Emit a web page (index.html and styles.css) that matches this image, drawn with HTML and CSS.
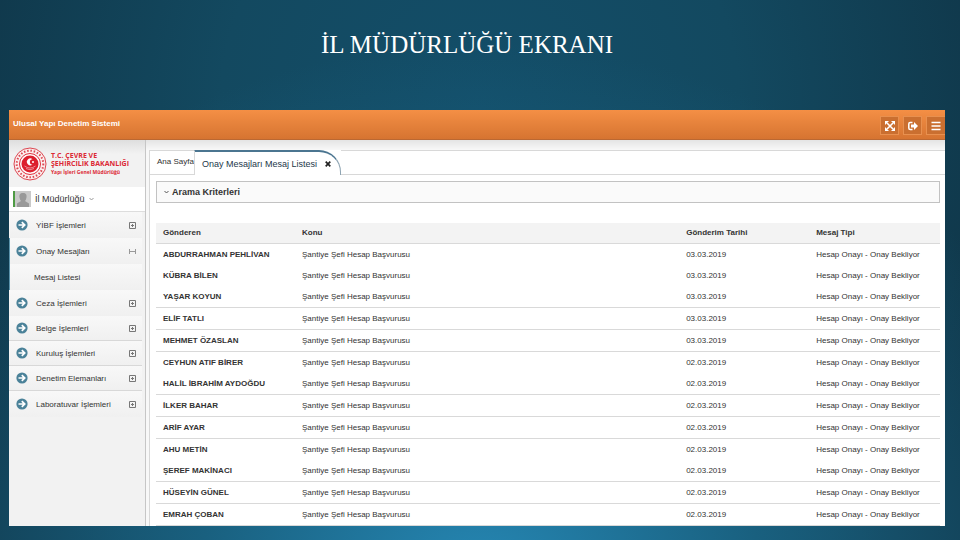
FILE: index.html
```html
<!DOCTYPE html>
<html lang="tr">
<head>
<meta charset="utf-8">
<title>Ulusal Yapı Denetim Sistemi</title>
<link rel="stylesheet" href="styles.css">
</head>
<body>
<svg class="defs" aria-hidden="true">
  <symbol id="arrow" viewBox="0 0 12 12"><circle cx="6" cy="6" r="5.6" fill="#4b8299"/><path d="M2.5 6H8M5.8 3.2L8.7 6 5.8 8.8" fill="none" stroke="#fff" stroke-width="1.7"/></symbol>
  <symbol id="plus" viewBox="0 0 7 7"><path d="M.5 .5H6.500V6.500H.5ZM2 3.500H5M3.500 2V5" fill="none" stroke="#777" stroke-width="1"/></symbol>
  <symbol id="minus" viewBox="0 0 7 7"><path d="M.5 1V6M6.500 1V6M1 3.500H6" fill="none" stroke="#999" stroke-width="1"/></symbol>
</svg>
<h1 class="title">İL MÜDÜRLÜĞÜ EKRANI</h1>
<div class="app">
  <header class="topbar">
    <strong class="brand">Ulusal Yapı Denetim Sistemi</strong>
    <div class="actions">
      <button class="action" aria-label="Tam ekran"><svg viewBox="0 0 10 10"><path d="M2 2L8 8M8 2L2 8" stroke="#fff" stroke-width="1.6"/><path d="M0 0H4L0 4ZM10 0V4L6 0ZM0 10V6L4 10ZM10 10H6L10 6Z" fill="#fff"/></svg></button>
      <button class="action" aria-label="Çıkış"><svg viewBox="0 0 10 10"><path d="M4.500 1.500H2.200Q.8 1.500 .8 3V7Q.8 8.500 2.200 8.500H4.500" fill="none" stroke="#fff" stroke-width="1.500"/><path d="M3 3.500H6V1L10 5 6 9V6.500H3Z" fill="#fff"/></svg></button>
      <button class="action" aria-label="Menü"><svg viewBox="0 0 10 10"><path d="M.5 1.500H9.500M.5 5H9.500M.5 8.500H9.500" stroke="#fff" stroke-width="1.500"/></svg></button>
    </div>
  </header>
  <div class="body">
    <aside class="sidebar">
      <div class="logo">
        <svg class="seal" viewBox="0 0 34 34">
          <circle cx="17" cy="17" r="16" fill="#fbeeee" stroke="#dc4650" stroke-width="1"/>
          <circle cx="17" cy="17" r="13.300" fill="none" stroke="#dc4650" stroke-width="2" stroke-dasharray="1.500 1.800"/>
          <circle cx="17" cy="17" r="10.500" fill="#fff" stroke="#e0303c" stroke-width="1"/>
          <circle cx="17" cy="17" r="8.500" fill="#dc1f2d"/>
          <path d="M11.500 19Q17 23 22.500 19M13 21.500Q17 24 21 21.500" fill="none" stroke="#f3a8ad" stroke-width=".8"/>
          <path d="M19.500 12.300A3.400 3.400 0 1 0 19.500 17.500A2.600 2.600 0 1 1 19.500 12.300Z" fill="#fff"/>
          <circle cx="20" cy="15" r="1" fill="#fff"/>
        </svg>
        <div class="ministry"><b>T.C. ÇEVRE VE</b><b>ŞEHİRCİLİK BAKANLIĞI</b><small>Yapı İşleri Genel Müdürlüğü</small></div>
      </div>
      <button class="user">
        <svg class="avatar" viewBox="0 0 18 16"><path d="M0 0H18V16H0Z" fill="#c9c9c9"/><path d="M0 0H2V16H0Z" fill="#4f9b45"/><path d="M10 2C13 2 14 4 13.500 6.500Q13 9 12 10L16 12.500V16H4V12.500L8 10Q7 9 6.500 6.500C6 4 7 2 10 2Z" fill="#999"/></svg>
        <span>İl Müdürlüğü</span>
        <svg class="caret" viewBox="0 0 5 4"><path d="M.5 1L2.500 3 4.500 1" fill="none" stroke="#999"/></svg>
      </button>
      <nav class="nav">
        <a href="#"><svg class="go"><use href="#arrow"/></svg><span>YİBF İşlemleri</span><svg class="sign"><use href="#plus"/></svg></a>
        <div class="open">
          <a href="#"><svg class="go"><use href="#arrow"/></svg><span>Onay Mesajları</span><svg class="sign"><use href="#minus"/></svg></a>
          <a href="#" class="sub">Mesaj Listesi</a>
        </div>
        <a href="#"><svg class="go"><use href="#arrow"/></svg><span>Ceza İşlemleri</span><svg class="sign"><use href="#plus"/></svg></a>
        <a href="#" class="ruled"><svg class="go"><use href="#arrow"/></svg><span>Belge İşlemleri</span><svg class="sign"><use href="#plus"/></svg></a>
        <a href="#" class="ruled"><svg class="go"><use href="#arrow"/></svg><span>Kuruluş İşlemleri</span><svg class="sign"><use href="#plus"/></svg></a>
        <a href="#" class="ruled"><svg class="go"><use href="#arrow"/></svg><span>Denetim Elemanları</span><svg class="sign"><use href="#plus"/></svg></a>
        <a href="#"><svg class="go"><use href="#arrow"/></svg><span>Laboratuvar İşlemleri</span><svg class="sign"><use href="#plus"/></svg></a>
      </nav>
    </aside>
    <main class="main">
      <div class="sheet">
        <div class="tabs">
          <a href="#" class="tab">Ana Sayfa</a>
          <div class="tab active"><a href="#">Onay Mesajları Mesaj Listesi</a><button class="close" aria-label="Kapat"><svg viewBox="0 0 6 6"><path d="M.7 .7L5.300 5.300M5.300 .7L.7 5.300" stroke="#222" stroke-width="1.700"/></svg></button></div>
          <div class="rest"></div>
        </div>
        <div class="content">
          <button class="criteria"><svg class="caret" viewBox="0 0 5 4"><path d="M.5 1L2.500 3 4.500 1" fill="none" stroke="#555"/></svg>Arama Kriterleri</button>
          <table class="messages">
            <thead><tr><th class="sender">Gönderen</th><th class="subject">Konu</th><th class="date">Gönderim Tarihi</th><th class="type">Mesaj Tipi</th></tr></thead>
            <tbody>
              <tr class="plain"><th>ABDURRAHMAN PEHLİVAN</th><td>Şantiye Şefi Hesap Başvurusu</td><td>03.03.2019</td><td>Hesap Onayı - Onay Bekliyor</td></tr>
              <tr class="plain"><th>KÜBRA BİLEN</th><td>Şantiye Şefi Hesap Başvurusu</td><td>03.03.2019</td><td>Hesap Onayı - Onay Bekliyor</td></tr>
              <tr><th>YAŞAR KOYUN</th><td>Şantiye Şefi Hesap Başvurusu</td><td>03.03.2019</td><td>Hesap Onayı - Onay Bekliyor</td></tr>
              <tr><th>ELİF TATLI</th><td>Şantiye Şefi Hesap Başvurusu</td><td>03.03.2019</td><td>Hesap Onayı - Onay Bekliyor</td></tr>
              <tr><th>MEHMET ÖZASLAN</th><td>Şantiye Şefi Hesap Başvurusu</td><td>03.03.2019</td><td>Hesap Onayı - Onay Bekliyor</td></tr>
              <tr class="plain"><th>CEYHUN ATIF BİRER</th><td>Şantiye Şefi Hesap Başvurusu</td><td>02.03.2019</td><td>Hesap Onayı - Onay Bekliyor</td></tr>
              <tr><th>HALİL İBRAHİM AYDOĞDU</th><td>Şantiye Şefi Hesap Başvurusu</td><td>02.03.2019</td><td>Hesap Onayı - Onay Bekliyor</td></tr>
              <tr><th>İLKER BAHAR</th><td>Şantiye Şefi Hesap Başvurusu</td><td>02.03.2019</td><td>Hesap Onayı - Onay Bekliyor</td></tr>
              <tr><th>ARİF AYAR</th><td>Şantiye Şefi Hesap Başvurusu</td><td>02.03.2019</td><td>Hesap Onayı - Onay Bekliyor</td></tr>
              <tr class="plain"><th>AHU METİN</th><td>Şantiye Şefi Hesap Başvurusu</td><td>02.03.2019</td><td>Hesap Onayı - Onay Bekliyor</td></tr>
              <tr><th>ŞEREF MAKİNACI</th><td>Şantiye Şefi Hesap Başvurusu</td><td>02.03.2019</td><td>Hesap Onayı - Onay Bekliyor</td></tr>
              <tr><th>HÜSEYİN GÜNEL</th><td>Şantiye Şefi Hesap Başvurusu</td><td>02.03.2019</td><td>Hesap Onayı - Onay Bekliyor</td></tr>
              <tr><th>EMRAH ÇOBAN</th><td>Şantiye Şefi Hesap Başvurusu</td><td>02.03.2019</td><td>Hesap Onayı - Onay Bekliyor</td></tr>
            </tbody>
          </table>
        </div>
      </div>
    </main>
  </div>
</div>
</body>
</html>
```
FILE: styles.css
```css
* { box-sizing: border-box; }
body {
  margin: 0;
  min-height: 100vh;
  padding: 0 15px 14px 9px;
  font-family: "Liberation Sans", sans-serif;
  font-size: 8px;
  color: #333;
  background: radial-gradient(ellipse 65% 100% at 50% 108%, #2688b5 0%, #19607f 45%, transparent 100%),
    radial-gradient(ellipse 60% 110% at 50% 20%, #134e69 0%, #134960 45%, #0f3446 100%);
}
a { color: inherit; text-decoration: none; }
button { border: 0; padding: 0; background: none; font: inherit; color: inherit; }
svg { display: block; flex: none; }
.defs { position: absolute; width: 0; height: 0; }
.title {
  margin: 0;
  height: 110px;
  padding: 30px 20px 0 0;
  text-align: center;
  font: 25px/30px "Liberation Serif", serif;
  color: #fff;
}
.app { background: #fff; }
.topbar {
  height: 30px;
  display: flex;
  justify-content: space-between;
  padding-left: 4px;
  background: linear-gradient(#f48f45, #d67431);
  border-bottom: 1px solid #bb6832;
}
.brand { color: #fff; font-size: 8px; line-height: 27px; }
.actions { display: flex; gap: 4px; padding-top: 6px; }
.action {
  width: 19px;
  height: 19px;
  display: grid;
  place-items: center;
  background: #ca6f30;
  border: 1px solid #e8904f;
}
.action:last-child { border-right: 0; }
.action svg { width: 10px; height: 10px; }
.body { display: flex; }
.sidebar { width: 137px; flex: none; background: #f2f2f2; border-right: 1px solid #c6c6c6; }
.logo {
  height: 47px;
  display: flex;
  align-items: center;
  gap: 4px;
  padding-left: 4px;
  background: linear-gradient(#dedede, #f2f2f2 14px);
}
.seal { width: 34px; height: 34px; }
.ministry { color: #dc2935; white-space: nowrap; font-family: "Open Sans", sans-serif; }
.ministry b, .ministry small { display: block; font-size: 7px; line-height: 8px; }
.ministry small { font-size: 5px; font-weight: 700; }
.user {
  width: 100%;
  height: 25px;
  display: flex;
  align-items: center;
  gap: 4px;
  padding-left: 4px;
  background: #fff;
  border-bottom: 1px solid #ddd;
  font-size: 9px;
}
.avatar { width: 18px; height: 16px; }
.caret { width: 5px; height: 4px; }
.nav a {
  height: 26px;
  display: flex;
  align-items: center;
  margin-right: 3px;
  padding: 0 6px 0 7px;
  background: linear-gradient(#f8f8f8, #f0f0f0);
}
.nav span { flex: 1; padding-left: 8px; }
.nav .ruled { height: 25px; border-bottom: 1px solid #d8d8d8; }
.nav .open { border-left: 1px solid #5b93ab; }
.nav .open a { padding-left: 6px; }
.nav .open .sub { padding-left: 24px; }
.go { width: 12px; height: 12px; }
.sign { width: 7px; height: 7px; }
.main {
  flex: 1;
  padding: 10px 0 0 3px;
  background: linear-gradient(#e4e4e4, #f8f8f8 10px);
}
.sheet { height: 100%; background: #fff; border-left: 1px solid #d8d8d8; }
.tabs { display: flex; height: 25px; line-height: 22px; background: #fff; }
.tab {
  padding-left: 7px;
  border-top: 1px solid #d8d8d8;
  border-bottom: 1px solid #d8d8d8;
}
.active {
  display: flex;
  align-items: center;
  gap: 8px;
  padding: 0 9px 0 7px;
  color: #23384a;
  font-size: 9px;
  border-top: 2px solid #4b7590;
  border-left: 1px solid #d8d8d8;
  border-right: 1px solid #8fa5b3;
  border-bottom: 0;
  border-radius: 0 22px 0 0;
}
.close svg { width: 6px; height: 6px; }
.rest { flex: 1; border-top: 1px solid #d8d8d8; border-bottom: 1px solid #d8d8d8; }
.content { padding: 6px 5px 0 6px; }
.criteria {
  width: 100%;
  height: 22px;
  display: flex;
  align-items: center;
  gap: 3px;
  padding-left: 7px;
  background: #fafafa;
  border: 1px solid #c2c2c2;
  font-size: 9px;
  font-weight: 700;
}
.messages {
  width: 100%;
  margin-top: 20px;
  table-layout: fixed;
  border-collapse: separate;
  border-spacing: 0;
  line-height: 21px;
}
.messages th, .messages td {
  padding: 0 0 0 7px;
  text-align: left;
  white-space: nowrap;
  border-bottom: 1px solid #d9d9d9;
}
.messages thead th { line-height: 20px; background: #f3f3f3; }
.messages .plain th, .messages .plain td { border-bottom: 0; }
.sender { width: 139px; }
.subject { width: 49%; }
.date { width: 130px; }
```
